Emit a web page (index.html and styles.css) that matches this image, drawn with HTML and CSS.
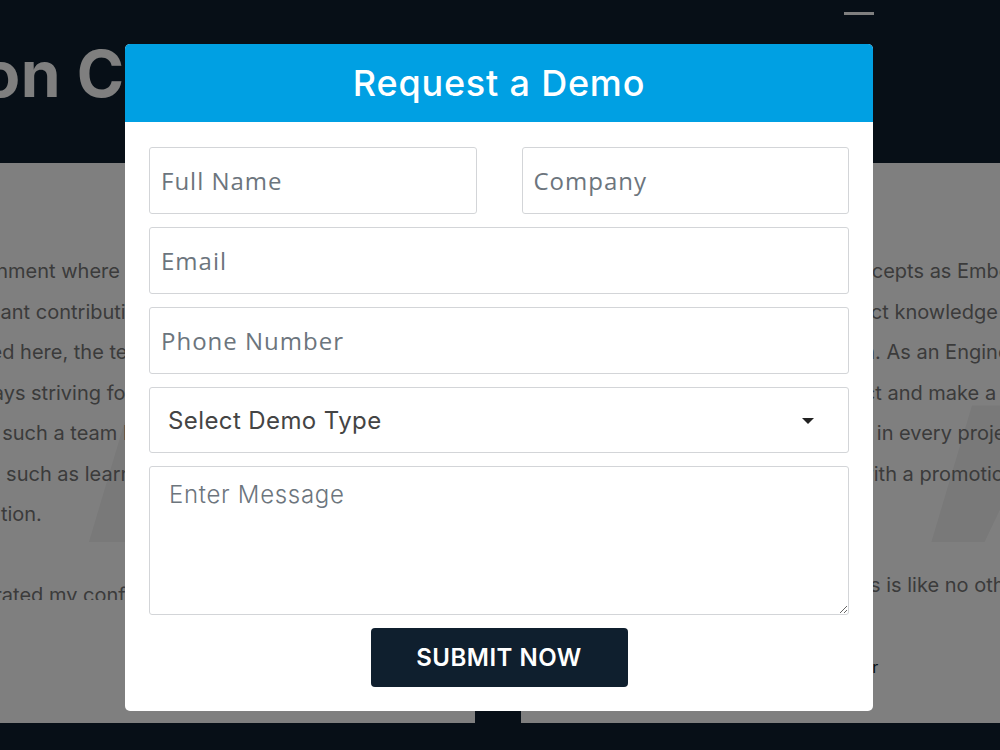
FILE: index.html
```html
<!DOCTYPE html>
<html lang="en">
<head>
    <meta charset="UTF-8">
    <meta name="viewport" content="width=device-width, initial-scale=1.0">
    <title>Request a Demo</title>
    <link rel="stylesheet" href="styles.css">
</head>
<body>
    <header class="site-header">
        <button class="menu-toggle" aria-label="Menu"><span></span></button>
    </header>

    <section class="hero">
        <h1>Life at Innovation Corner</h1>
    </section>

    <section class="stories">
        <article class="story">
            <span class="story-mark">&#8221;</span>
            <div class="story-text">
                <p>a safe environment where I could make<br>
                some significant contribution to real products.<br>
                Since I worked here, the team has helped me grow<br>
                as we're always striving for better ways of working.<br>
                To be part of such a team brings so many things<br>
                true benefits, such as learning and support<br>
                great recognition.</p>
                <p>It has accelerated my confidence and my career.</p>
            </div>
        </article>
        <article class="story">
            <span class="story-mark">&#8221;</span>
            <div class="story-text">
                <p>Here I learned to treat fresher concepts as Embedded<br>
                systems engineers do, with product knowledge<br>
                at the very heart of every decision. As an Engineer<br>
                I am trusted to own the full product and make a difference<br>
                with great responsibility, and trust in every project<br>
                and, last month, I was rewarded with a promotion<br>
                for it.</p>
                <p class="story-last">The support I got from my mentors is like no other.</p>
            </div>
            <p class="story-author">Priya Menon, Principal Embedded Engineer</p>
        </article>
    </section>

    <div class="backdrop"></div>

    <div class="modal-wrap">
        <div class="modal">
            <div class="modal-header">
                <h2>Request a Demo</h2>
            </div>
            <form class="demo-form">
                <input type="text" placeholder="Full Name">
                <input type="text" placeholder="Company">
                <input type="email" class="wide" placeholder="Email">
                <input type="tel" class="wide" placeholder="Phone Number">
                <div class="select-box wide">
                    <select>
                        <option>Select Demo Type</option>
                        <option>Product Walkthrough</option>
                        <option>Technical Deep Dive</option>
                    </select>
                    <span class="select-arrow"></span>
                </div>
                <textarea class="wide" placeholder="Enter Message"></textarea>
                <button type="button" class="wide submit-btn">SUBMIT NOW</button>
            </form>
        </div>
    </div>
</body>
</html>
```

FILE: styles.css
```css
body {
    margin: 0;
    padding: 0;
    background-color: #0f1f2e;
    font-family: Inter, "Noto Sans", sans-serif;
    overflow: hidden;
    height: 750px;
}
.site-header {
    height: 20px;
    display: flex;
    justify-content: flex-end;
    padding-right: 126px;
}
.menu-toggle {
    background: none;
    border: 0;
    padding: 7px 0 0;
    cursor: pointer;
}
.menu-toggle span {
    display: block;
    width: 30px;
    height: 3px;
    background: #fff;
}
.hero {
    height: 143px;
    overflow: hidden;
}
.hero h1 {
    margin: 14px 0 0 -485px;
    color: #fff;
    font-size: 64px;
    font-weight: 700;
    line-height: 80px;
    white-space: nowrap;
    letter-spacing: 0.5px;
}
.stories {
    display: flex;
    gap: 46px;
    margin-left: -125px;
    height: 560px;
}
.story {
    position: relative;
    flex: 0 0 600px;
    background: #fff;
    padding: 88px 30px 0;
    box-sizing: border-box;
    overflow: hidden;
}
.story:first-child {
    padding-left: 0;
}
/* big faded quote behind each story */
.story-mark {
    position: absolute;
    top: 185px;
    right: -40px;
    font-size: 420px;
    line-height: 1;
    font-weight: 900;
    color: #f3f3f3;
    font-style: italic;
}
.story:first-child .story-mark {
    right: auto;
    left: 170px;
}
.story-text {
    position: relative;
    height: 349px;
    overflow: hidden;
    color: #777;
    font-size: 20px;
    line-height: 40.5px;
    white-space: nowrap;
}
.story-text p {
    margin: 0 0 40px;
}
.story-text .story-last {
    margin-top: -10px;
}
.story-author {
    position: relative;
    margin: 57px 0 0;
    color: #0f1f2e;
    font-size: 16px;
    white-space: nowrap;
}
.backdrop {
    position: fixed;
    inset: 0;
    background: rgba(0, 0, 0, 0.5);
}
.modal-wrap {
    position: fixed;
    inset: 0;
    display: flex;
    justify-content: center;
    align-items: flex-start;
    padding-top: 44px;
}
.modal {
    width: 748px;
    margin-left: -2px;
    background: #fff;
    border-radius: 5px;
    overflow: hidden;
}
.modal-header {
    background: #00a0e3;
    height: 78px;
    display: flex;
    align-items: center;
    justify-content: center;
}
.modal-header h2 {
    margin: 0;
    color: #fff;
    font-size: 36px;
    font-weight: 500;
    letter-spacing: 0.8px;
}
.demo-form {
    display: grid;
    grid-template-columns: 1fr 1fr;
    column-gap: 45px;
    row-gap: 13px;
    padding: 25px 24px 24px;
}
.wide {
    grid-column: 1 / -1;
}
.demo-form input,
.demo-form select,
.demo-form textarea {
    box-sizing: border-box;
    width: 100%;
    border: 1px solid #d3d5d8;
    border-radius: 3px;
    background: #fff;
    outline: none;
}
.demo-form input {
    height: 67px;
    padding: 0 11px;
    font-family: "Open Sans", sans-serif;
    font-size: 24px;
    letter-spacing: 1px;
    color: #495057;
}
.demo-form input::placeholder,
.demo-form textarea::placeholder {
    color: #6c757d;
}
.select-box {
    position: relative;
}
.demo-form select {
    height: 66px;
    padding: 0 18px;
    appearance: none;
    font-family: Inter, sans-serif;
    font-size: 24px;
    letter-spacing: 0.4px;
    color: #444;
}
.select-arrow {
    position: absolute;
    right: 35px;
    top: 31px;
    border-left: 6px solid transparent;
    border-right: 6px solid transparent;
    border-top: 6px solid #222;
    pointer-events: none;
}
.demo-form textarea {
    height: 149px;
    padding: 13px 19px;
    font-family: Inter, sans-serif;
    font-size: 24px;
    font-weight: 300;
    letter-spacing: 0.7px;
    resize: vertical;
}
.submit-btn {
    justify-self: center;
    width: 257px;
    height: 59px;
    border: 0;
    border-radius: 4px;
    background: #0f1f2e;
    color: #fff;
    font-family: Inter, sans-serif;
    font-size: 24px;
    font-weight: 600;
    letter-spacing: 0.5px;
    cursor: pointer;
}
```
